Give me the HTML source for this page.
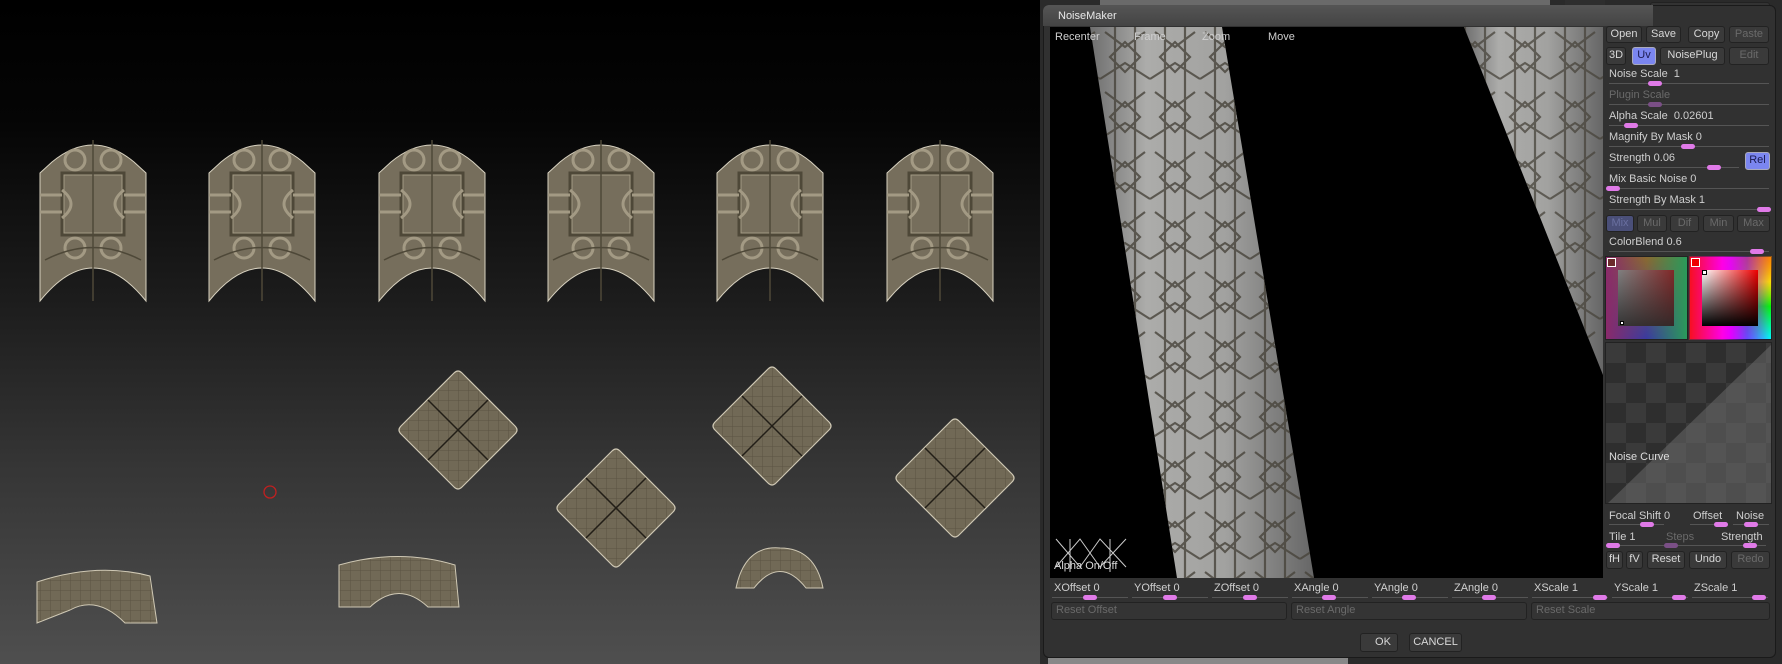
<!DOCTYPE html>
<html><head><meta charset="utf-8"><style>
*{margin:0;padding:0;box-sizing:border-box}
body{width:1782px;height:664px;overflow:hidden;position:relative;background:#000;font-family:"Liberation Sans",sans-serif;font-size:11px;color:#cfcfcf}
.a{position:absolute}
.t{position:absolute;white-space:nowrap;line-height:13px;font-size:11px}
.btn{position:absolute;background:#3a3a3a;border:1px solid #222;border-radius:3px;color:#d8d8d8;text-align:center;line-height:15px;font-size:11px}
.dis{color:#6a6a6a}
.trk{position:absolute;height:1px;background:#555}
.kn{position:absolute;width:14px;height:5px;border-radius:3px;background:#e07ae8}
</style></head><body>
<div class="a" style="left:0;top:0;width:1050px;height:664px;background:linear-gradient(#000 0%,#050505 18%,#1c1c1c 45%,#353535 70%,#4f4f4f 100%)"></div>
<svg class="a" style="left:0;top:0" width="1050" height="664">
<defs>
<pattern id="g" width="10" height="10" patternUnits="userSpaceOnUse"><rect width="10" height="10" fill="#716956"/><path d="M0 0H10M0 0V10" stroke="#5a5343" stroke-width="1"/></pattern>
<g id="arch"><path d="M0 33 L12 22 Q53 -12 94 22 L106 33 L106 161 Q53 95 0 161 Z" fill="#766e5c" stroke="#d8d2c0" stroke-width="1"/>
<rect x="22" y="33" width="62" height="62" fill="none" stroke="#4e4838" stroke-width="3"/>
<rect x="24" y="35" width="58" height="58" fill="none" stroke="#a39a84" stroke-width="1"/>
<circle cx="35" cy="20" r="10" fill="none" stroke="#a39a84" stroke-width="3"/><circle cx="71" cy="20" r="10" fill="none" stroke="#a39a84" stroke-width="3"/>
<circle cx="35" cy="108" r="10" fill="none" stroke="#a39a84" stroke-width="3"/><circle cx="71" cy="108" r="10" fill="none" stroke="#a39a84" stroke-width="3"/>
<path d="M22 50 Q40 64 22 78 M84 50 Q66 64 84 78 M0 55 H22 M84 55 H106 M0 72 H22 M84 72 H106" fill="none" stroke="#a39a84" stroke-width="3"/>
<path d="M5 120 Q53 95 101 120 M53 0 V161" fill="none" stroke="#4e4838" stroke-width="1.5"/></g>
<g id="dia"><path d="M-4 -57 Q0 -61 4 -57 L57 -4 Q61 0 57 4 L4 57 Q0 61 -4 57 L-57 4 Q-61 0 -57 -4Z" fill="url(#g)" stroke="#cfc8b4" stroke-width="1.2"/><path d="M-30 -30 L30 30 M30 -30 L-30 30" stroke="#221e17" stroke-width="1.5"/></g>
</defs>
<use href="#arch" x="40" y="140"/><use href="#arch" x="209" y="140"/><use href="#arch" x="379" y="140"/><use href="#arch" x="548" y="140"/><use href="#arch" x="717" y="140"/><use href="#arch" x="887" y="140"/>
<use href="#dia" x="458" y="430"/><use href="#dia" x="616" y="508"/><use href="#dia" x="772" y="426"/><use href="#dia" x="955" y="478"/>
<path d="M37 582 Q97 562 150 576 L157 623 L125 623 Q97 595 70 610 L37 623Z" fill="url(#g)" stroke="#cfc8b4"/>
<path d="M339 565 Q399 548 455 565 L459 607 L428 607 Q399 580 370 607 L339 607Z" fill="url(#g)" stroke="#cfc8b4"/>
<path d="M736 588 Q745 545 780 548 Q815 548 823 588 L806 588 Q780 555 754 588Z" fill="url(#g)" stroke="#cfc8b4"/>
<circle cx="270" cy="492" r="6" fill="none" stroke="#c02020" stroke-width="1.3"/>
</svg>
<div class="a" style="left:1040px;top:0;width:742px;height:664px;background:#2a2a2a"></div>
<div class="a" style="left:1100px;top:0;width:450px;height:8px;background:#6a6a6a"></div>
<div class="a" style="left:1565px;top:0;width:40px;height:24px;background:#2e2e2e;color:#888;font-size:9px;text-align:center;line-height:38px">Persp</div>
<div class="btn dis" style="left:1650px;top:2px;width:120px;height:20px;background:#333;text-align:left;padding-left:6px;line-height:18px;color:#777">Bake All</div>
<div class="a" style="left:1048px;top:658px;width:300px;height:6px;background:#888"></div>
<div class="a" style="left:1043px;top:5px;width:733px;height:653px;background:#313131;border:1px solid #1a1a1a;border-radius:6px"></div>
<div class="a" style="left:1043px;top:5px;width:610px;height:21px;background:linear-gradient(#555,#444);border-radius:6px 0 0 0"></div>
<div class="t" style="left:1058px;top:10px;color:#e8e8e8">NoiseMaker</div>
<div class="a" style="left:1050px;top:27px;width:553px;height:551px;background:#000;overflow:hidden">
<svg width="553" height="551" style="position:absolute;left:0;top:0">
<defs><linearGradient id="b" x1="0" x2="1"><stop offset="0" stop-color="#6e6e6e"/><stop offset=".25" stop-color="#acacaa"/><stop offset=".6" stop-color="#a2a2a0"/><stop offset="1" stop-color="#666"/></linearGradient>
<pattern id="pp" width="50" height="60" patternUnits="userSpaceOnUse"><path d="M5 5 L25 20 L45 5 M10 30 L25 45 L40 30 L25 15Z M0 52 L25 36 L50 52 M15 0 V60 M35 0 V60" fill="none" stroke="#47433a" stroke-width="2.2"/></pattern></defs>
<path d="M40 0 L172 0 L264 551 L127 551Z" fill="url(#b)"/>
<path d="M40 0 L172 0 L264 551 L127 551Z" fill="url(#pp)" opacity=".8"/>
<path d="M414 0 L553 0 L553 348Z" fill="url(#b)"/>
<path d="M414 0 L553 0 L553 348Z" fill="url(#pp)" opacity=".75"/>
<rect x="2" y="507" width="80" height="42" fill="#000"/>
<path d="M6 512 L30 540 L50 512 L76 540 M6 540 L30 512 L50 540 L76 512 M20 512 V545 M60 512 V545" stroke="#ccc" fill="none" stroke-width="1"/>
</svg>
<div class="t" style="left:5px;top:4px">Recenter</div>
<div class="t" style="left:84px;top:4px">Frame</div>
<div class="t" style="left:152px;top:4px">Zoom</div>
<div class="t" style="left:218px;top:4px">Move</div>
<div class="t" style="left:4px;top:533px;color:#ddd">Alpha On/Off</div>
</div>
<div class="btn" style="left:1606px;top:26px;width:36px;height:17px">Open</div>
<div class="btn" style="left:1646px;top:26px;width:35px;height:17px">Save</div>
<div class="btn" style="left:1688px;top:26px;width:37px;height:17px">Copy</div>
<div class="btn dis" style="left:1729px;top:26px;width:40px;height:17px">Paste</div>
<div class="btn" style="left:1606px;top:47px;width:20px;height:18px">3D</div>
<div class="btn" style="left:1632px;top:47px;width:24px;height:18px;background:#7b86f0;color:#1a1a50;border-color:#aab">Uv</div>
<div class="btn" style="left:1660px;top:47px;width:65px;height:18px">NoisePlug</div>
<div class="btn dis" style="left:1729px;top:47px;width:40px;height:18px">Edit</div>
<div class="t" style="left:1609px;top:68px">Noise Scale &nbsp;1</div><div class="trk" style="left:1609px;top:83px;width:160px"></div><div class="kn" style="left:1648px;top:81px"></div>
<div class="t dis" style="left:1609px;top:89px">Plugin Scale</div><div class="trk" style="left:1609px;top:104px;width:160px"></div><div class="kn" style="left:1648px;top:102px;background:#7a4f86"></div>
<div class="t" style="left:1609px;top:110px">Alpha Scale &nbsp;0.02601</div><div class="trk" style="left:1609px;top:125px;width:160px"></div><div class="kn" style="left:1624px;top:123px"></div>
<div class="t" style="left:1609px;top:131px">Magnify By Mask 0</div><div class="trk" style="left:1609px;top:146px;width:160px"></div><div class="kn" style="left:1681px;top:144px"></div>
<div class="t" style="left:1609px;top:152px">Strength 0.06</div><div class="trk" style="left:1609px;top:167px;width:130px"></div><div class="kn" style="left:1707px;top:165px"></div>
<div class="btn" style="left:1745px;top:152px;width:25px;height:18px;background:#7b86f0;color:#1a1a50;border-color:#aab">Rel</div>
<div class="t" style="left:1609px;top:173px">Mix Basic Noise 0</div><div class="trk" style="left:1609px;top:188px;width:160px"></div><div class="kn" style="left:1606px;top:186px"></div>
<div class="t" style="left:1609px;top:194px">Strength By Mask 1</div><div class="trk" style="left:1609px;top:209px;width:160px"></div><div class="kn" style="left:1757px;top:207px"></div>
<div class="btn" style="left:1606px;top:215px;width:28px;height:17px;background:#4a4f78;color:#6a70a0">Mix</div>
<div class="btn dis" style="left:1637px;top:215px;width:30px;height:17px">Mul</div>
<div class="btn dis" style="left:1670px;top:215px;width:29px;height:17px">Dif</div>
<div class="btn dis" style="left:1703px;top:215px;width:31px;height:17px">Min</div>
<div class="btn dis" style="left:1737px;top:215px;width:33px;height:17px">Max</div>
<div class="t" style="left:1609px;top:236px">ColorBlend 0.6</div><div class="trk" style="left:1609px;top:251px;width:160px"></div><div class="kn" style="left:1750px;top:249px"></div>
<div class="a" style="left:1605px;top:256px;width:83px;height:84px;background:linear-gradient(90deg,#8a2a6a,transparent 50%,#2a9a5a),linear-gradient(#8a6a30,#3a3aa0);border:1px solid #222"></div>
<div class="a" style="left:1618px;top:270px;width:56px;height:56px;background:linear-gradient(90deg,rgba(128,128,128,1),rgba(130,40,40,1));"></div>
<div class="a" style="left:1618px;top:270px;width:56px;height:56px;background:linear-gradient(rgba(0,0,0,0),rgba(40,40,40,.85))"></div>
<div class="a" style="left:1607px;top:258px;width:9px;height:9px;border:1px solid #fff;background:#6a2a2a"></div>
<div class="a" style="left:1620px;top:321px;width:4px;height:4px;border:1px solid #000;background:#fff"></div>
<div class="a" style="left:1689px;top:256px;width:83px;height:84px;background:linear-gradient(90deg,#f00,#f0f 50%,transparent),linear-gradient(#f80,#ff0 30%,#0f0 60%,#0ff);border:1px solid #222"></div>
<div class="a" style="left:1689px;top:256px;width:83px;height:84px;background:linear-gradient(90deg,#f02040,#f0f 40%,rgba(0,0,255,.6) 70%,transparent),linear-gradient(#f44,#f80 0%,transparent 60%);opacity:.5"></div>
<div class="a" style="left:1702px;top:270px;width:56px;height:56px;background:linear-gradient(transparent,#000),linear-gradient(90deg,#fff,#e00)"></div>
<div class="a" style="left:1691px;top:258px;width:9px;height:9px;border:1px solid #fff;background:#e00"></div>
<div class="a" style="left:1702px;top:270px;width:5px;height:5px;border:1px solid #000;background:#fff"></div>
<div class="a" style="left:1605px;top:342px;width:167px;height:162px;border:1px solid #222;overflow:hidden;background-color:#3a3a3a;background-image:linear-gradient(45deg,#2e2e2e 25%,transparent 25%,transparent 75%,#2e2e2e 75%),linear-gradient(45deg,#2e2e2e 25%,transparent 25%,transparent 75%,#2e2e2e 75%);background-size:40px 40px;background-position:0 0,20px 20px">
<svg width="167" height="162" style="position:absolute;left:0;top:0"><path d="M0 162 L167 0 L167 162Z" fill="#6a6a6a" fill-opacity=".55"/></svg>
<div class="t" style="left:3px;top:108px;color:#ddd">Noise Curve</div></div>
<div class="t" style="left:1609px;top:510px">Focal Shift 0</div><div class="trk" style="left:1609px;top:524px;width:55px"></div><div class="kn" style="left:1640px;top:522px"></div>
<div class="t" style="left:1693px;top:510px">Offset</div><div class="trk" style="left:1690px;top:524px;width:33px"></div><div class="kn" style="left:1714px;top:522px"></div>
<div class="t" style="left:1736px;top:510px">Noise</div><div class="trk" style="left:1733px;top:524px;width:36px"></div><div class="kn" style="left:1744px;top:522px"></div>
<div class="t" style="left:1609px;top:531px">Tile 1</div><div class="trk" style="left:1606px;top:545px;width:160px"></div><div class="kn" style="left:1606px;top:543px"></div>
<div class="t dis" style="left:1666px;top:531px">Steps</div><div class="kn" style="left:1664px;top:543px;background:#7a4f86"></div>
<div class="t" style="left:1721px;top:531px">Strength</div><div class="kn" style="left:1743px;top:543px"></div>
<div class="btn" style="left:1606px;top:551px;width:17px;height:18px">fH</div>
<div class="btn" style="left:1626px;top:551px;width:17px;height:18px">fV</div>
<div class="btn" style="left:1647px;top:551px;width:38px;height:18px">Reset</div>
<div class="btn" style="left:1689px;top:551px;width:38px;height:18px">Undo</div>
<div class="btn dis" style="left:1731px;top:551px;width:39px;height:18px">Redo</div>
<div class="t" style="left:1054px;top:582px">XOffset 0</div><div class="trk" style="left:1052px;top:597px;width:76px"></div><div class="kn" style="left:1083px;top:595px"></div>
<div class="t" style="left:1134px;top:582px">YOffset 0</div><div class="trk" style="left:1132px;top:597px;width:76px"></div><div class="kn" style="left:1163px;top:595px"></div>
<div class="t" style="left:1214px;top:582px">ZOffset 0</div><div class="trk" style="left:1212px;top:597px;width:76px"></div><div class="kn" style="left:1243px;top:595px"></div>
<div class="t" style="left:1294px;top:582px">XAngle 0</div><div class="trk" style="left:1292px;top:597px;width:76px"></div><div class="kn" style="left:1322px;top:595px"></div>
<div class="t" style="left:1374px;top:582px">YAngle 0</div><div class="trk" style="left:1372px;top:597px;width:76px"></div><div class="kn" style="left:1402px;top:595px"></div>
<div class="t" style="left:1454px;top:582px">ZAngle 0</div><div class="trk" style="left:1452px;top:597px;width:76px"></div><div class="kn" style="left:1482px;top:595px"></div>
<div class="t" style="left:1534px;top:582px">XScale 1</div><div class="trk" style="left:1532px;top:597px;width:76px"></div><div class="kn" style="left:1593px;top:595px"></div>
<div class="t" style="left:1614px;top:582px">YScale 1</div><div class="trk" style="left:1612px;top:597px;width:76px"></div><div class="kn" style="left:1672px;top:595px"></div>
<div class="t" style="left:1694px;top:582px">ZScale 1</div><div class="trk" style="left:1692px;top:597px;width:76px"></div><div class="kn" style="left:1752px;top:595px"></div>
<div class="btn dis" style="left:1051px;top:602px;width:236px;height:18px;text-align:left;padding-left:4px;background:#343434">Reset Offset</div>
<div class="btn dis" style="left:1291px;top:602px;width:236px;height:18px;text-align:left;padding-left:4px;background:#343434">Reset Angle</div>
<div class="btn dis" style="left:1531px;top:602px;width:239px;height:18px;text-align:left;padding-left:4px;background:#343434">Reset Scale</div>
<div class="btn" style="left:1360px;top:633px;width:38px;height:19px;line-height:17px;padding-left:8px">OK</div>
<div class="btn" style="left:1409px;top:633px;width:53px;height:19px;line-height:17px">CANCEL</div>
</body></html>
